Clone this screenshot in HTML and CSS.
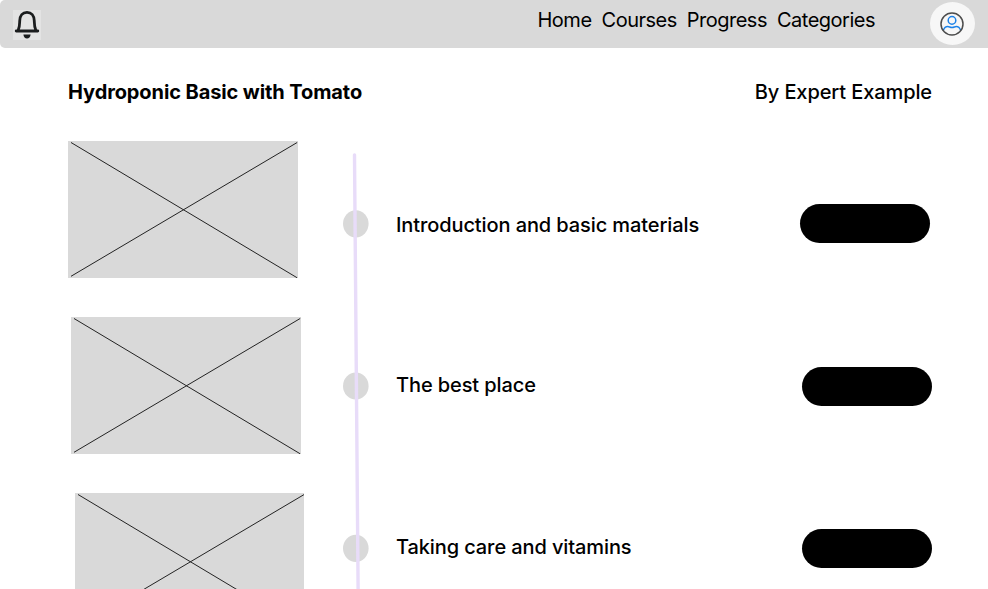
FILE: index.html
```html
<!DOCTYPE html>
<html lang="en">
<head>
<meta charset="utf-8">
<title>Hydroponic Basic with Tomato</title>
<link rel="stylesheet" href="styles.css">
</head>
<body>
<header class="topbar">
  <svg class="bell" viewBox="0 0 28 30" aria-hidden="true">
    <rect width="28" height="30" fill="#e3e3e3"/>
    <path d="M3.2 21H24.8M5.2 20.2C6.7 17.3 6.6 14.5 6.7 11C6.8 5.5 9.6 2.3 14 2.3S21.2 5.5 21.3 11C21.4 14.5 21.3 17.3 22.8 20.2" fill="none" stroke="#1b1d1e" stroke-width="2.8" stroke-linecap="round" stroke-linejoin="round"/>
    <path d="M10.4 24.4H17.6C17.3 27 16 28.4 14 28.4S10.7 27 10.4 24.4Z" fill="#1b1d1e"/>
  </svg>
  <nav class="nav">
    <a>Home</a><a>Courses</a><a>Progress</a><a>Categories</a>
  </nav>
  <div class="avatar">
    <svg viewBox="0 0 24 24" aria-hidden="true">
      <g fill="none" stroke-width="1.5">
        <path d="M3.3 18.4C4.3 15.8 6 14.6 7.7 14.6C9.3 14.6 10 15.5 12 15.5S14.7 14.6 16.3 14.6C18 14.6 19.7 15.8 20.7 18.4" stroke="#1c82e8"/>
        <circle cx="12" cy="8.4" r="3.8" stroke="#1c82e8"/>
        <circle cx="12" cy="12" r="11" stroke="#4c4c4c"/>
      </g>
    </svg>
  </div>
</header>
<main class="course">
  <div class="heading">
    <h1>Hydroponic Basic with Tomato</h1>
    <p>By Expert Example</p>
  </div>
  <div class="content">
    <div class="thumbs">
      <svg class="thumb" viewBox="0 0 230 137.5"><path d="M3 1.5L229.5 137M3 135.5L229.5 1.5"/></svg>
      <svg class="thumb second" viewBox="0 0 230 137.5"><path d="M3 1.5L229.5 137M3 135.5L229.5 1.5"/></svg>
      <svg class="thumb third" viewBox="0 0 230 137.5"><path d="M3 1.5L229.5 137M3 135.5L229.5 1.5"/></svg>
    </div>
    <svg class="timeline" viewBox="0 0 26 448" aria-hidden="true">
      <g fill="#d9d9d9">
        <ellipse cx="12.8" cy="82.8" rx="12.8" ry="13.6"/>
        <ellipse cx="12.8" cy="245" rx="12.8" ry="13.6"/>
        <ellipse cx="12.8" cy="407.3" rx="12.8" ry="13.6"/>
      </g>
      <path d="M11.5 14L15.2 460" stroke="#e8dcf9" stroke-width="3.4" stroke-linecap="round"/>
    </svg>
    <ul class="lessons">
      <li>Introduction and basic materials</li>
      <li>The best place</li>
      <li>Taking care and vitamins</li>
    </ul>
    <div class="actions">
      <button class="action first" aria-label="Open lesson 1"></button>
      <button class="action" aria-label="Open lesson 2"></button>
      <button class="action" aria-label="Open lesson 3"></button>
    </div>
  </div>
</main>
</body>
</html>
```
FILE: styles.css
```css
* { box-sizing: border-box; }
body {
  margin: 0;
  height: 589px;
  overflow: hidden;
  background: #fff;
  color: #000;
  font: 500 20px/24px Inter, sans-serif;
  letter-spacing: -0.1px;
}
.topbar {
  display: flex;
  align-items: flex-start;
  height: 48px;
  padding-left: 12.5px;
  background: #d9d9d9;
  border-radius: 5px 0 0 5px;
}
.bell { width: 28px; height: 30px; margin-top: 10px; }
.nav {
  display: flex;
  gap: 10px;
  margin: 8px 55px 0 auto;
  font-weight: 400;
  letter-spacing: -0.5px;
}
.avatar {
  display: flex;
  align-items: center;
  justify-content: center;
  width: 45px;
  height: 43px;
  margin: 2px 13px 0 0;
  border-radius: 50%;
  background: #f7f7f7;
}
.avatar svg { width: 24px; height: 24px; margin-right: 1px; }
.course { padding: 32px 56px 0 68px; }
.heading { display: flex; justify-content: space-between; height: 61px; }
.heading h1 { margin: 0; font-size: 20px; font-weight: 700; }
.heading p { margin: 0; }
.content {
  display: grid;
  grid-template-columns: 275px 53px 1fr 133px;
  height: 448px;
  overflow: hidden;
}
.thumbs { display: flex; flex-direction: column; gap: 38.9px; }
.thumb {
  flex: none;
  width: 229.7px;
  height: 137.3px;
  background: #d9d9d9;
  fill: none;
  stroke: #222;
  stroke-width: 1;
}
.second { margin-left: 3px; }
.third { margin-left: 6.5px; }
.timeline { width: 26px; height: 448px; }
.lessons {
  display: grid;
  grid-template-rows: 159px 162px 24px;
  margin: 0;
  padding: 72.8px 0 0;
  list-style: none;
}
.lessons li:first-child { margin-top: -0.4px; }
.actions {
  display: flex;
  flex-direction: column;
  gap: 123px;
  padding-top: 63.2px;
}
.action {
  flex: none;
  width: 130px;
  height: 39px;
  margin-left: 3px;
  padding: 0;
  border: 0;
  border-radius: 20px;
  background: #000;
}
.action.first { margin-left: 0.5px; }
.action:nth-child(2) { margin-top: 0.4px; }
```
